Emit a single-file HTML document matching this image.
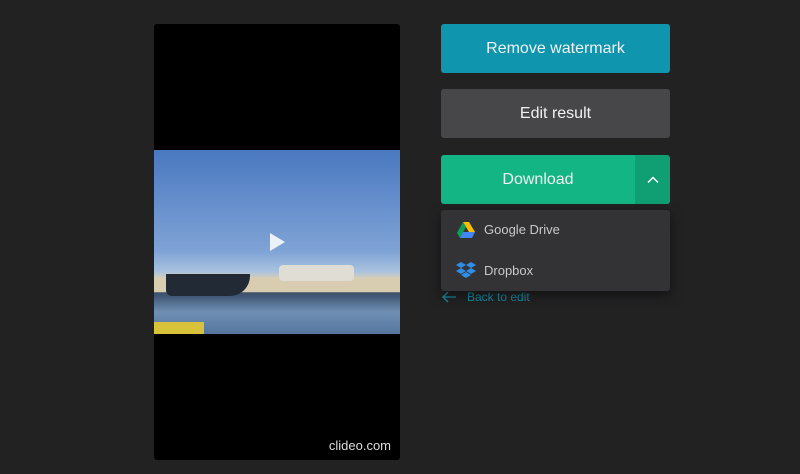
<!DOCTYPE html>
<html><head><style>
body{margin:0;width:800px;height:474px;background:#222223;font-family:"Liberation Sans",sans-serif;position:relative;overflow:hidden}
.v{position:absolute;left:154px;top:24px;width:246px;height:436px;background:#000;border-radius:3px;overflow:hidden}
.img{position:absolute;left:0;top:126px;width:246px;height:184px;background:linear-gradient(#4a78c0 0%,#7fa3d6 55%,#a9c2df 66%,#d9cfb5 70%,#c8bca0 76%,#3a4f6a 78%,#6f8fb3 88%,#5575a0 100%)}
.btn{position:absolute;left:441px;width:229px;height:49px;border-radius:3px;color:#f2f2f2;font-size:16px;display:flex;align-items:center;justify-content:center}
.dd{position:absolute;left:441px;top:210px;width:229px;height:81px;background:#333335;border-radius:3px;box-shadow:0 4px 12px rgba(0,0,0,.5)}
.it{position:absolute;left:43px;color:#c8c8c8;font-size:13px}
</style></head><body>
<div class="v"><div class="img">
<div style="position:absolute;left:0;top:128px;width:246px;height:14px;background:#d8cdb0"></div>
<div style="position:absolute;left:12px;top:124px;width:84px;height:22px;background:#222a36;border-radius:0 0 20px 6px"></div>
<div style="position:absolute;left:125px;top:115px;width:75px;height:16px;background:#e0ddd5;border-radius:4px"></div>
<div style="position:absolute;left:0;top:172px;width:50px;height:12px;background:#d8c23a"></div>
<div style="position:absolute;left:116px;top:83px;width:0;height:0;border-left:15px solid rgba(255,255,255,.85);border-top:9px solid transparent;border-bottom:9px solid transparent"></div>
</div>
<div style="position:absolute;right:9px;bottom:7px;color:#ddd;font-size:13px">clideo.com</div></div>
<div class="btn" style="top:24px;background:#0f95ad">Remove watermark</div>
<div class="btn" style="top:89px;background:#47474a">Edit result</div>
<div class="btn" style="top:155px;background:#14b584;width:194px;border-radius:3px 0 0 3px">Download</div>
<div class="btn" style="top:155px;left:635px;width:35px;background:#109e73;border-radius:0 3px 3px 0"><svg width="12" height="8" viewBox="0 0 12 8"><path d="M1 6.5L6 1.5l5 5" stroke="#fff" stroke-width="1.5" fill="none"/></svg></div>
<svg style="position:absolute;left:441px;top:291px" width="16" height="12" viewBox="0 0 16 12"><path d="M15 6H2M7 1L2 6l5 5" stroke="#178ea5" stroke-width="1.3" fill="none"/></svg>
<div style="position:absolute;left:467px;top:290px;color:#178ea5;font-size:12px">Back to edit</div>
<div class="dd">
<svg style="position:absolute;left:16px;top:12px" width="18" height="16" viewBox="0 0 18 16"><path d="M6 0h6l6 10h-6z" fill="#fbbc04"/><path d="M6 0l3 5-6 11-3-5z" fill="#0f9d58"/><path d="M3 16l3-6h12l-3 6z" fill="#4285f4"/></svg>
<div class="it" style="top:12px">Google Drive</div>
<svg style="position:absolute;left:15px;top:52px" width="20" height="17" viewBox="0 0 20 17"><path fill="#2f8fe8" d="M5 0l5 3-5 3-5-3zM15 0l5 3-5 3-5-3zM0 9l5-3 5 3-5 3zM20 9l-5-3-5 3 5 3zM5 13l5-3 5 3-5 3z"/></svg>
<div class="it" style="top:53px">Dropbox</div>
</div>
</body></html>
